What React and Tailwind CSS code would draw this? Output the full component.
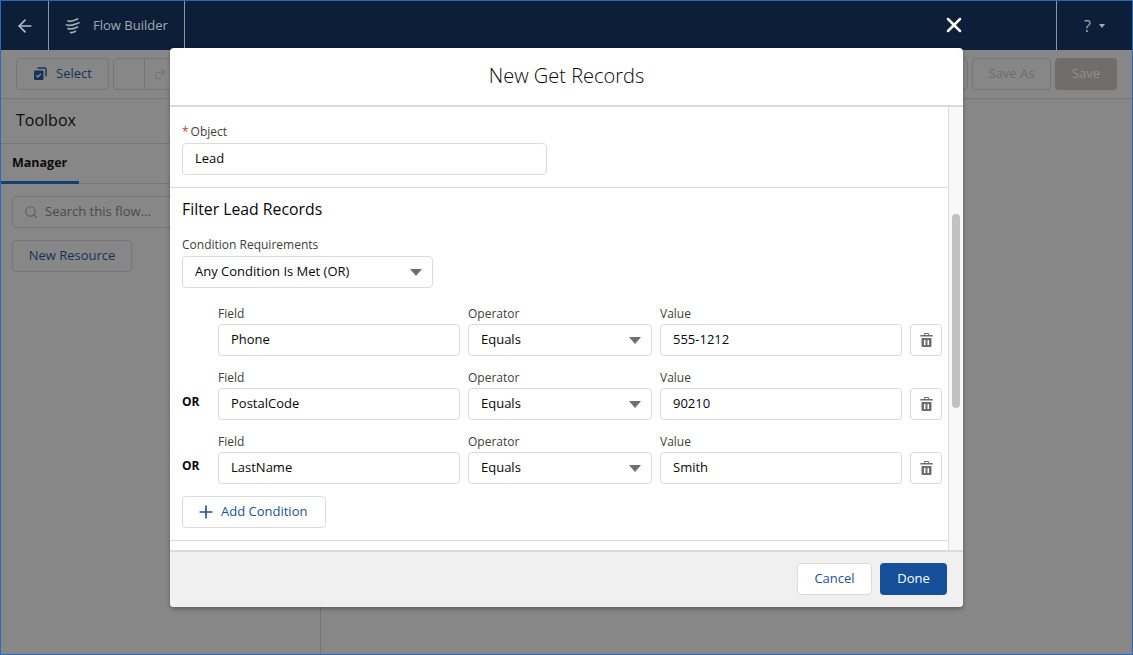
import { ArrowLeft, Plus, Redo2, Search, X } from 'lucide-react';

const conditions = [
  { field: 'Phone', value: '555-1212' },
  { field: 'PostalCode', value: '90210', or: true },
  { field: 'LastName', value: 'Smith', or: true },
];

function FlowIcon() {
  return (
    <svg width="16" height="16" viewBox="0 0 16 16" fill="none" stroke="#a5a9ae" strokeWidth="1.700" strokeLinecap="round">
      <path d="M3 2.800c3 1.600 6-.2 9.500-1.800" />
      <path d="M1.500 6.800c4 2 7.500 0 12.500-2" />
      <path d="M3 10.500c3 1.400 6 0 9.500-1.500" />
      <path d="M5.500 14.500c2 .5 3.500-.2 5-1.200" />
    </svg>
  );
}

function SelectIcon() {
  return (
    <svg width="14" height="14" viewBox="0 0 14 14" fill="none">
      <path d="M4.500 1h7.500a1 1 0 0 1 1 1v7.500" stroke="#16325c" strokeWidth="1.400" />
      <rect x="1" y="3.500" width="9.500" height="9.500" rx="1" fill="#16325c" />
      <path d="M3.300 8.300l1.600 1.600 3-3" stroke="#9a9a9a" strokeWidth="1.200" />
    </svg>
  );
}

function TrashIcon() {
  return (
    <svg width="13" height="14" viewBox="0 0 13 14" fill="#706e6b">
      <path d="M5 0h3a1 1 0 0 1 1 1v1h3.200a.6.6 0 0 1 .6.6v.8H.2v-.8A.6.6 0 0 1 .8 2H4V1a1 1 0 0 1 1-1zm0 1v1h3V1z" fillRule="evenodd" />
      <path d="M1.500 5h10v8a1 1 0 0 1-1 1h-8a1 1 0 0 1-1-1zm2.500 2v5h1.500V7zm3.500 0v5H9V7z" fillRule="evenodd" />
    </svg>
  );
}

function Caret() {
  return <div className="w-0 h-0 -mr-0.5 border-l-[6px] border-r-[6px] border-t-[7px] border-l-transparent border-r-transparent border-t-[#706e6b]" />;
}

function Box({ className, children }) {
  return (
    <div className={`h-8 flex items-center justify-between bg-white border border-[#dddbda] rounded px-3 text-[13px] text-[#080707] ${className}`}>
      {children}
    </div>
  );
}

function ConditionRow({ field, value, or }) {
  return (
    <div className="flex items-end h-[52px] w-[760px]">
      <div className="w-9 shrink-0 h-8 flex items-center text-xs font-bold text-[#080707] pb-1">{or ? 'OR' : ''}</div>
      <div className="w-[242px] shrink-0">
        <div className="text-xs leading-[19px] mb-px text-[#3e3e3c]">Field</div>
        <Box>{field}</Box>
      </div>
      <div className="w-[184px] shrink-0 ml-2">
        <div className="text-xs leading-[19px] mb-px text-[#3e3e3c]">Operator</div>
        <Box>Equals<Caret /></Box>
      </div>
      <div className="w-[242px] shrink-0 ml-2">
        <div className="text-xs leading-[19px] mb-px text-[#3e3e3c]">Value</div>
        <Box>{value}</Box>
      </div>
      <div className="w-8 h-8 shrink-0 ml-2 flex items-center justify-center bg-white border border-[#dddbda] rounded">
        <TrashIcon />
      </div>
    </div>
  );
}

function Modal() {
  return (
    <div className="absolute left-[169px] top-[47px] w-[793px] h-[559px] flex flex-col bg-white rounded shadow-[0_2px_4px_rgba(0,0,0,0.3)] overflow-hidden">
      <div className="h-[59px] pb-0.5 flex items-center justify-center border-b-2 border-[#dddbda] text-[20px] font-light text-[#080707] shrink-0">
        New Get Records
      </div>
      <div className="flex flex-1 min-h-0">
        <div className="w-[779px] border-r border-[#dddbda] overflow-hidden">
          <div className="h-[81px] px-3 pt-[15px] border-b border-[#dddbda]">
            <div className="text-xs leading-[20px] mb-px text-[#3e3e3c]"><span className="text-[#c23934] mr-0.5">*</span>Object</div>
            <Box className="w-[365px]">Lead</Box>
          </div>
          <div className="px-3 pt-[11px] h-[353px] border-b border-[#dddbda]">
            <div className="text-[15.8px] leading-5 text-[#080707]">Filter Lead Records</div>
            <div className="text-xs leading-[20px] text-[#3e3e3c] mt-4 mb-px">Condition Requirements</div>
            <Box className="w-[251px]">Any Condition Is Met (OR)<Caret /></Box>
            <div className="mt-4">
              {conditions.map((c, i) => (
                <div key={c.field} className={i ? 'mt-3' : ''}>
                  <ConditionRow {...c} />
                </div>
              ))}
            </div>
            <button className="h-8 w-[144px] mt-3 pl-[13px] flex items-center gap-[5px] bg-white border border-[#dddbda] rounded text-[13px] text-[#1b5297]">
              <Plus size={20} strokeWidth={2} />
              Add Condition
            </button>
          </div>
        </div>
        <div className="flex-1 bg-[#f8f8f8] relative flex justify-center">
          <div className="absolute top-[107px] w-2 h-[194px] bg-[#c1c1c1] rounded" />
        </div>
      </div>
      <div className="h-[57px] pb-0.5 flex items-center justify-end gap-2 px-4 bg-[#f0f0f0] border-t-2 border-[#dddbda] shrink-0">
        <button className="h-8 w-[75px] bg-white border border-[#dddbda] rounded text-[13px] text-[#1b5297]">Cancel</button>
        <button className="h-8 w-[67px] bg-[#16509a] rounded text-[13px] text-white">Done</button>
      </div>
    </div>
  );
}

export default function App() {
  return (
    <div className="relative w-[1133px] h-[655px] overflow-hidden bg-[#878787] border border-[#2a68b8] flex flex-col font-['Open_Sans',sans-serif]">
      <header className="h-[49px] shrink-0 flex items-center bg-[#0d1f38] text-[#a5a9ae]">
        <div className="w-[48px] h-full flex items-center justify-center border-r border-[#8c95a2]">
          <ArrowLeft size={20} color="#b5bac2" strokeWidth={2} />
        </div>
        <div className="w-[136px] h-full flex items-center gap-[12px] pl-[16px] border-r border-[#8c95a2] text-[13px]">
          <FlowIcon />
          Flow Builder
        </div>
        <div className="flex-1 h-full flex items-center justify-end pr-[90px] pb-0.5">
          <X size={24} color="#fff" strokeWidth={2.500} />
        </div>
        <div className="w-[76px] h-full flex items-center justify-center gap-2 border-l border-[#8c95a2] text-base">
          ?
          <div className="w-0 h-0 border-l-[3px] border-r-[3px] border-t-[4px] border-l-transparent border-r-transparent border-t-[#a5a9ae]" />
        </div>
      </header>

      <div className="h-[49px] shrink-0 flex items-center justify-between pl-[15px] pr-[15px] border-b border-[#777]">
        <div className="flex gap-1">
          <div className="h-8 w-[93px] flex items-center justify-center gap-[9px] border border-[#767676] rounded text-[13px] text-[#16325c]">
            <SelectIcon />
            Select
          </div>
          <div className="h-8 w-[62px] flex border border-[#767676] rounded">
            <div className="w-[31px] border-r border-[#767676]" />
            <div className="flex-1 flex items-center justify-center">
              <Redo2 size={14} color="#767676" />
            </div>
          </div>
        </div>
        <div className="flex gap-1">
          <div className="h-8 w-[40px] border border-[#767676] rounded" />
          <div className="h-8 w-[79px] flex items-center justify-center border border-[#767676] rounded text-[13px] text-[#6e6e6e]">Save As</div>
          <div className="h-8 w-[62px] flex items-center justify-center bg-[#6f6e6d] rounded text-[13px] text-[#8f8f8f]">Save</div>
        </div>
      </div>

      <div className="flex-1 flex min-h-0">
        <aside className="w-[320px] border-r border-[#757575]">
          <div className="h-[45px] pb-0.5 flex items-center pl-[15px] text-base text-[#0c0c0c] border-b border-[#777]">Toolbox</div>
          <div className="h-10 border-b border-[#777]">
            <div className="w-[78px] h-10 pt-0.5 flex items-center pl-[11px] text-[12.5px] font-bold text-[#0c0c0c] border-b-[3px] border-[#163f73]">Manager</div>
          </div>
          <div className="px-[11px] pt-3">
            <div className="h-8 flex items-center gap-[7px] pl-[11px] border border-[#767676] rounded text-[13px] text-[#4a4a4a]">
              <Search size={14} color="#5f5f5f" />
              Search this flow...
            </div>
            <div className="h-8 w-[120px] mt-3 flex items-center justify-center border border-[#767676] rounded text-[13px] text-[#16325c]">New Resource</div>
          </div>
        </aside>
      </div>

      <Modal />
    </div>
  );
}
